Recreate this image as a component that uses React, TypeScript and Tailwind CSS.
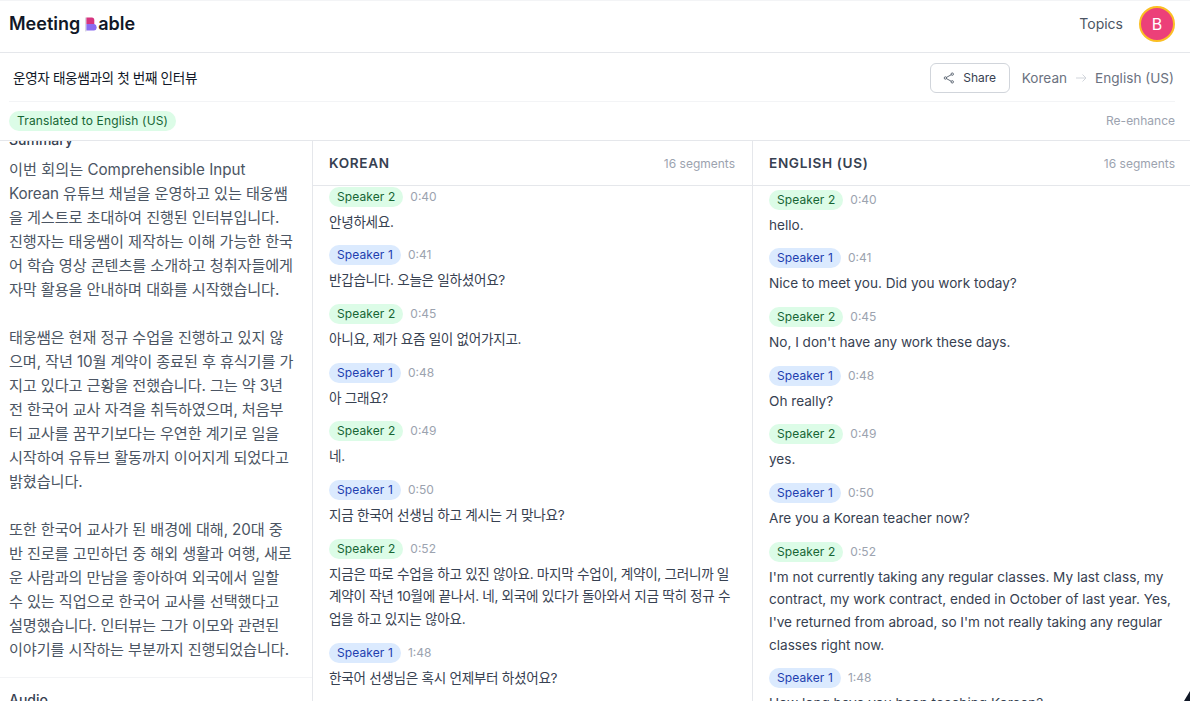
const FONT = "font-['Inter','Noto_Sans_CJK_KR',sans-serif]";

type Seg = { s: 1 | 2; t: string; lines: string[] };

const ko: Seg[] = [
  { s: 2, t: "0:40", lines: ["안녕하세요."] },
  { s: 1, t: "0:41", lines: ["반갑습니다. 오늘은 일하셨어요?"] },
  { s: 2, t: "0:45", lines: ["아니요, 제가 요즘 일이 없어가지고."] },
  { s: 1, t: "0:48", lines: ["아 그래요?"] },
  { s: 2, t: "0:49", lines: ["네."] },
  { s: 1, t: "0:50", lines: ["지금 한국어 선생님 하고 계시는 거 맞나요?"] },
  {
    s: 2,
    t: "0:52",
    lines: [
      "지금은 따로 수업을 하고 있진 않아요. 마지막 수업이, 계약이, 그러니까 일",
      "계약이 작년 10월에 끝나서. 네, 외국에 있다가 돌아와서 지금 딱히 정규 수",
      "업을 하고 있지는 않아요.",
    ],
  },
  { s: 1, t: "1:48", lines: ["한국어 선생님은 혹시 언제부터 하셨어요?"] },
];

const en: Seg[] = [
  { s: 2, t: "0:40", lines: ["hello."] },
  { s: 1, t: "0:41", lines: ["Nice to meet you. Did you work today?"] },
  { s: 2, t: "0:45", lines: ["No, I don't have any work these days."] },
  { s: 1, t: "0:48", lines: ["Oh really?"] },
  { s: 2, t: "0:49", lines: ["yes."] },
  { s: 1, t: "0:50", lines: ["Are you a Korean teacher now?"] },
  {
    s: 2,
    t: "0:52",
    lines: [
      "I'm not currently taking any regular classes. My last class, my",
      "contract, my work contract, ended in October of last year. Yes,",
      "I've returned from abroad, so I'm not really taking any regular",
      "classes right now.",
    ],
  },
  { s: 1, t: "1:48", lines: ["How long have you been teaching Korean?"] },
];

const summary = [
  [
    "이번 회의는 Comprehensible Input",
    "Korean 유튜브 채널을 운영하고 있는 태웅쌤",
    "을 게스트로 초대하여 진행된 인터뷰입니다.",
    "진행자는 태웅쌤이 제작하는 이해 가능한 한국",
    "어 학습 영상 콘텐츠를 소개하고 청취자들에게",
    "자막 활용을 안내하며 대화를 시작했습니다.",
  ],
  [
    "태웅쌤은 현재 정규 수업을 진행하고 있지 않",
    "으며, 작년 10월 계약이 종료된 후 휴식기를 가",
    "지고 있다고 근황을 전했습니다. 그는 약 3년",
    "전 한국어 교사 자격을 취득하였으며, 처음부",
    "터 교사를 꿈꾸기보다는 우연한 계기로 일을",
    "시작하여 유튜브 활동까지 이어지게 되었다고",
    "밝혔습니다.",
  ],
  [
    "또한 한국어 교사가 된 배경에 대해, 20대 중",
    "반 진로를 고민하던 중 해외 생활과 여행, 새로",
    "운 사람과의 만남을 좋아하여 외국에서 일할",
    "수 있는 직업으로 한국어 교사를 선택했다고",
    "설명했습니다. 인터뷰는 그가 이모와 관련된",
    "이야기를 시작하는 부분까지 진행되었습니다.",
  ],
];

function Badge({ s }: { s: 1 | 2 }) {
  return s === 1 ? (
    <span className="inline-flex h-5 items-center rounded-full bg-[#dbeafe] px-2 text-xs tracking-[0.1px] text-[#1e40af]">
      Speaker 1
    </span>
  ) : (
    <span className="inline-flex h-5 items-center rounded-full bg-[#dcfce7] px-2 text-xs tracking-[0.1px] text-[#166534]">
      Speaker 2
    </span>
  );
}

function Transcript({
  title,
  items,
  first,
  headerPad,
  textTrack,
}: {
  title: string;
  items: Seg[];
  first: string;
  headerPad: string;
  textTrack: string;
}) {
  return (
    <section className="flex min-w-0 flex-1 flex-col overflow-hidden">
      <div className={`flex h-[45px] shrink-0 items-center justify-between border-b border-[#e5e7eb] pl-4 pt-[1px] ${headerPad}`}>
        <span className="text-[13.6px] font-semibold tracking-[0.65px] text-[#374151]">{title}</span>
        <span className="text-xs text-[#9ca3af]">16 segments</span>
      </div>
      <div className="min-h-0 flex-1 overflow-hidden px-4">
        <div className={`flex flex-col gap-3 ${first}`}>
          {items.map((seg, i) => (
            <div key={i} className="flex flex-col gap-1">
              <div className="flex h-5 items-center gap-[7px]">
                <Badge s={seg.s} />
                <span className="text-xs text-[#9ca3af]">{seg.t}</span>
              </div>
              <div className={`text-[13.6px] leading-[22.67px] text-[#374151] ${textTrack}`}>
                {seg.lines.map((l, j) => (
                  <div key={j} className="whitespace-nowrap">
                    {l}
                  </div>
                ))}
              </div>
            </div>
          ))}
        </div>
      </div>
    </section>
  );
}

export default function App() {
  return (
    <div className={`relative flex h-[701px] w-[1190px] flex-col overflow-hidden bg-white ${FONT}`}>
      <header className="flex h-[53px] shrink-0 items-center justify-between border-b border-t border-b-[#e5e7eb] border-t-[#f3f4f6] pb-[5px] pl-[9px] pr-[15px]">
        <div className="flex items-center text-lg font-semibold text-[#111827]">
          <span>Meeting</span>
          <svg viewBox="0 0 14 15" className="ml-[5px] h-[15px] w-[13px]">
            <rect x="0" y="0" width="1.5" height="15" fill="#d8d8e0" />
            <path d="M1.5 0H7.5Q10 0 10 3V7H1.5Z" fill="#d6347f" />
            <path d="M1.5 7H10Q12.5 7.5 12.5 10.5Q12.5 14 9.5 14H1.5Z" fill="#8b6cf0" />
          </svg>
          <span>able</span>
        </div>
        <div className="flex items-center gap-4">
          <span className="text-sm text-[#4b5563]">Topics</span>
          <div className="flex h-9 w-9 items-center justify-center rounded-full border-2 border-[#fbbf24] bg-[#ec4079] text-base text-white">
            B
          </div>
        </div>
      </header>

      <div className="shrink-0 border-b border-[#e5e7eb] pl-[9px] pr-[15px]">
        <div className="flex h-[49px] items-center justify-between border-b border-[#f3f4f6] pt-[2px]">
          <h1 className="pl-1 text-[13.6px] font-normal tracking-[-0.35px] text-[#111827]">운영자 태웅쌤과의 첫 번째 인터뷰</h1>
          <div className="flex items-center gap-3">
            <button className="flex h-[30px] w-20 items-center justify-center gap-2 rounded-md border border-[#d1d5db] text-xs font-normal text-[#374151]">
              <svg viewBox="0 0 14 14" className="h-3 w-3" fill="none" stroke="#4b5563" strokeWidth="1">
                <circle cx="10.8" cy="2.5" r="1.4" />
                <circle cx="2.8" cy="7" r="1.4" />
                <circle cx="10.8" cy="11.5" r="1.4" />
                <path d="M4 6.3L9.6 3.2M4 7.7L9.6 10.8" />
              </svg>
              Share
            </button>
            <div className="flex items-center gap-[8px] pr-px text-[13.6px] text-[#6b7280]">
              <span>Korean</span>
              <svg viewBox="0 0 12 12" className="h-3 w-3" fill="none" stroke="#d1d5db" strokeWidth="1">
                <path d="M1 6H11M7.5 2.5L11 6L7.5 9.5" />
              </svg>
              <span>English (US)</span>
            </div>
          </div>
        </div>
        <div className="flex h-[38px] items-center justify-between">
          <span className="inline-flex h-5 items-center rounded-full bg-[#dcfce7] px-2 text-xs tracking-[0.16px] text-[#166534]">
            Translated to English (US)
          </span>
          <span className="text-xs text-[#9ca3af]">Re-enhance</span>
        </div>
      </div>

      <main className="flex min-h-0 flex-1">
        <aside className="flex w-[313px] shrink-0 flex-col overflow-hidden border-r border-[#e5e7eb] px-[9px]">
          <div className="-mt-[11px] text-sm font-medium leading-5 text-[#374151]">Summary</div>
          <div className="mt-[8px] flex flex-col gap-6 text-[15.2px] leading-6 text-[#4b5563]">
            {summary.map((p, i) => (
              <div key={i}>
                {p.map((l, j) => (
                  <div key={j} className={i === 0 && j === 0 ? "whitespace-nowrap" : "whitespace-nowrap tracking-[-0.12px]"}>
                    {l}
                  </div>
                ))}
              </div>
            ))}
          </div>
          <div className="-mx-[9px] mt-[15px] border-t border-[#f3f4f6] px-[9px] pt-3 text-sm font-medium leading-5 text-[#374151]">
            Audio
          </div>
        </aside>
        <div className="flex w-[440px] shrink-0 border-r border-[#e5e7eb]">
          <Transcript title="KOREAN" items={ko} first="mt-[0.5px]" headerPad="pr-[17px]" textTrack="tracking-[-0.3px]" />
        </div>
        <Transcript title="ENGLISH (US)" items={en} first="mt-[3.5px]" headerPad="pr-[15px]" textTrack="" />
      </main>

      <svg viewBox="0 0 6 10" className="absolute bottom-0 right-0 h-[10px] w-[6px]">
        <path d="M0 10L6 0V10Z" fill="#111827" />
      </svg>
    </div>
  );
}
